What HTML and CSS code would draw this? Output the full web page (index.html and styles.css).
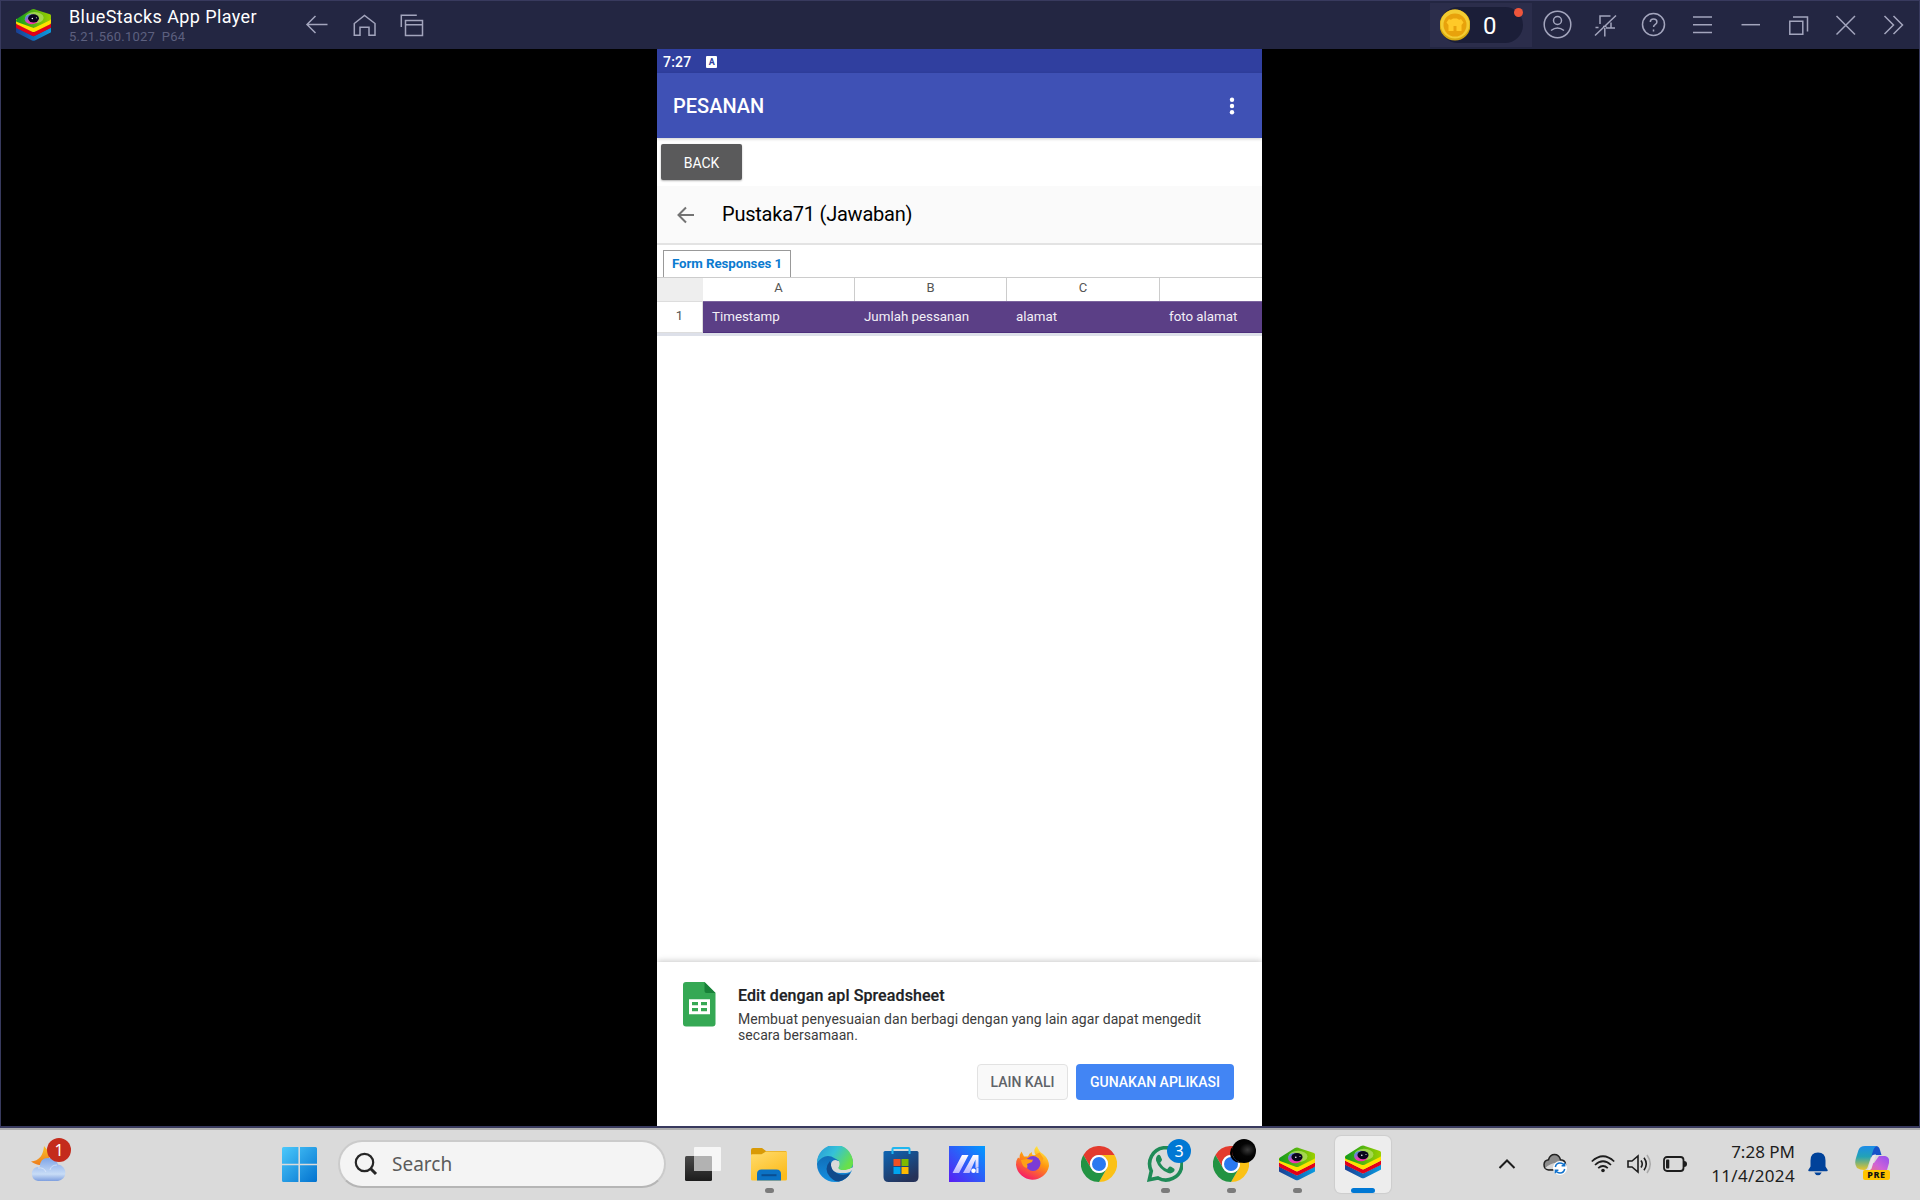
FILE: index.html
```html
<!DOCTYPE html>
<html lang="id">
<head>
<meta charset="utf-8">
<title>BlueStacks App Player</title>
<link rel="stylesheet" href="styles.css">
</head>
<body>
<svg class="defs" width="0" height="0" aria-hidden="true">
  <defs>
    <linearGradient id="bsGreen" x1="0" x2="1"><stop offset="0" stop-color="#109a1e"/><stop offset="1" stop-color="#9bd000"/></linearGradient>
    <linearGradient id="bsBlue" x1="0" x2="1"><stop offset="0" stop-color="#1a3f94"/><stop offset="1" stop-color="#0a9be0"/></linearGradient>
    <linearGradient id="bsRing" x1="0" x2="1" y1="0" y2="1"><stop offset="0" stop-color="#00b9f2"/><stop offset=".5" stop-color="#e83fb8"/><stop offset="1" stop-color="#ff2aa0"/></linearGradient>
    <symbol id="bluestacks" viewBox="0 0 36 33">
      <path fill="url(#bsBlue)" d="M0 19l18 9 18-9v4.400q0 .8-.8 1.200L19.500 32.400q-1.500.8-3 0L.8 24.600q-.8-.4-.8-1.200z"/>
      <path fill="#e2001a" d="M0 15l18 9 18-9v3.600q0 .8-.8 1.200L19.500 27.600q-1.500.8-3 0L.8 19.800q-.8-.4-.8-1.200z"/>
      <path fill="#ffe100" d="M0 10l18 9 18-9v4.400q0 .8-.8 1.200L19.500 23.400q-1.500.8-3 0L.8 15.600q-.8-.4-.8-1.200z"/>
      <path fill="url(#bsGreen)" d="M15.500.7q2.500-1.200 5 0L35 5.400q1 .5 1 1.500v3.200q0 1-1 1.500l-15 7.300q-2 1-4 0L1 13.400q-1-.5-1-1.400 0-1 1-2z"/>
      <ellipse cx="19" cy="9" rx="9.500" ry="5.800" fill="#b5dd66" opacity=".75"/>
      <ellipse cx="16" cy="10.500" rx="7" ry="5.200" fill="url(#bsRing)"/>
      <ellipse cx="18" cy="9.600" rx="5.600" ry="4.200" fill="#08061c"/>
      <circle cx="16.800" cy="9.800" r=".8" fill="#fff"/><circle cx="21" cy="9" r=".6" fill="#ddd"/>
    </symbol>
    <symbol id="chrome" viewBox="0 0 36 36">
      <path fill="#e33b2e" d="M2.400 9A18 18 0 0 1 33.600 9H18a9 9 0 0 0-7.800 13.500z"/>
      <path fill="#fbc116" d="M33.600 9A18 18 0 0 1 18 36l7.800-13.500A9 9 0 0 0 18 9z"/>
      <path fill="#229342" d="M18 36A18 18 0 0 1 2.400 9l7.800 13.500a9 9 0 0 0 15.600 0z"/>
      <circle cx="18" cy="18" r="9" fill="#fff"/><circle cx="18" cy="18" r="7" fill="#2a79f0"/>
    </symbol>
  </defs>
</svg>

<div class="window">
  <header class="titlebar">
    <svg class="logo" width="35" height="32"><use href="#bluestacks"/></svg>
    <div class="app-name">
      <div class="name">BlueStacks App Player</div>
      <div class="version">5.21.560.1027&nbsp; P64</div>
    </div>
    <nav class="tools tools-left">
      <svg viewBox="0 0 48 48"><path d="M34.500 24.500h-20M22.500 16l-8.500 8.500 8.500 8.500"/></svg>
      <svg viewBox="0 0 48 48"><path d="M13.300 23.500L23.500 15.500l10.500 8v11.800h-6v-8h-9v8h-5.700z"/></svg>
      <svg viewBox="0 0 48 48"><path d="M16.500 20.500h17v15h-17zM16.500 24.700h17M12.300 27V15.300h15.500"/></svg>
    </nav>
    <div class="coins">
      <div class="coin-pill">
        <svg width="30" height="32" viewBox="0 0 30 32"><circle cx="15" cy="16" r="15.500" fill="#d5a80f"/><circle cx="15" cy="15" r="14.500" fill="#f3cc32"/><circle cx="15" cy="16" r="11.500" fill="#e8a20c"/><path fill="#ffc928" d="M9 10q2 1.500 4-.5h4q2 2 4 .5l2.500 3.500-2 2.500v6h-5v-5h-3v5h-5v-6l-2-2.500z"/></svg>
        <span class="coin-count">0</span>
      </div>
      <i class="dot"></i>
    </div>
    <nav class="tools">
      <svg viewBox="0 0 48 48"><circle cx="23.500" cy="24.500" r="13.300"/><circle cx="23.500" cy="20.500" r="4"/><path d="M17 30.500q6.500-5 13 0"/></svg>
      <svg viewBox="0 0 48 48"><path d="M13 35.500L34 15.500M18 24v-8h10.500M29 22.500v5.500h4M24.500 26.500H21M22.800 28v8.500M13.500 27.500h3M24 28h8"/></svg>
      <svg viewBox="0 0 48 48"><circle cx="23.500" cy="24.500" r="11"/><path d="M20.300 22q0-3 3.300-3t3.300 3q0 1.500-1.800 2.600-1.500.9-1.500 2.400M23.500 29.500v2"/></svg>
      <svg viewBox="0 0 48 48"><path d="M15 17h19M15 24.700h19M15 32.500h19"/></svg>
      <svg viewBox="0 0 48 48"><path d="M15.500 24.700h18.500"/></svg>
      <svg viewBox="0 0 48 48"><path d="M15.800 21.300h13v13h-13zM19 17h14.500v14.500"/></svg>
      <svg viewBox="0 0 48 48"><path d="M14.500 16l18.500 18.500M33 16L14.500 34.500"/></svg>
      <svg viewBox="0 0 48 48"><path d="M14.500 16l9 9-9 9M23.500 16l9 9-9 9"/></svg>
    </nav>
  </header>

  <main class="stage">
    <section class="phone">
      <div class="status">
        <span>7:27</span>
        <span class="ime">A</span>
      </div>
      <div class="toolbar">
        <h1>PESANAN</h1>
        <svg width="6" height="18" viewBox="0 0 6 18" fill="#fff"><circle cx="3" cy="2.700" r="2.200"/><circle cx="3" cy="9" r="2.200"/><circle cx="3" cy="15.300" r="2.200"/></svg>
      </div>
      <div class="back-row"><button class="back">BACK</button></div>
      <div class="doc-head">
        <svg width="18" height="18" viewBox="0 0 18 18" fill="none" stroke="#737373" stroke-width="2"><path d="M17 9H2M9 1.500L1.500 9 9 16.500"/></svg>
        <h2>Pustaka71 (Jawaban)</h2>
      </div>
      <div class="tabs"><div class="tab">Form Responses 1</div></div>
      <div class="grid head"><div class="corner"></div><div>A</div><div>B</div><div>C</div><div></div></div>
      <div class="grid row"><div class="num">1</div><div>Timestamp</div><div>Jumlah pessanan</div><div>alamat</div><div>foto alamat</div></div>
      <div class="sheet-space"></div>
      <div class="promo">
        <svg class="sheets" width="33" height="45" viewBox="0 0 33 45"><path fill="#35a854" d="M3 0h18.500L32.500 11v30.500a3 3 0 0 1-3 3H3a3 3 0 0 1-3-3V3a3 3 0 0 1 3-3z"/><path fill="#188038" d="M21.500 0l11 11h-9a2 2 0 0 1-2-2z"/><path fill="#fff" fill-rule="evenodd" d="M6 17.300h21v15H6zM9 20v3.300h6V20zM18 20v3.300h6V20zM9 26v3.300h6V26zM18 26v3.300h6V26z"/></svg>
        <div class="promo-body">
          <h3>Edit dengan apl Spreadsheet</h3>
          <p>Membuat penyesuaian dan berbagi dengan yang lain agar dapat mengedit<br>secara bersamaan.</p>
          <div class="actions"><button class="later">LAIN KALI</button><button class="use">GUNAKAN APLIKASI</button></div>
        </div>
      </div>
    </section>
  </main>
</div>

<footer class="taskbar">
  <div class="weather">
    <svg width="36" height="36" viewBox="0 0 36 36">
      <defs><linearGradient id="cl" x2="0" y2="1"><stop offset="0" stop-color="#7fa5e8"/><stop offset=".7" stop-color="#c8dcf6"/><stop offset="1" stop-color="#7e9fdf"/></linearGradient><linearGradient id="mo" x2="0" y2="1"><stop offset="0" stop-color="#f9c22b"/><stop offset="1" stop-color="#ee7d1c"/></linearGradient></defs>
      <path fill="url(#mo)" d="M14 0q8 8 4 14-6 9-17 1.500 12-1 13-15.500z"/>
      <path fill="url(#cl)" d="M8 35a7.200 7.200 0 0 1-1-14q2 0 2.500.3Q10 12 18 12t10 6.500A8.300 8.300 0 0 1 28 35z"/>
      <path fill="none" stroke="#ecf4fe" opacity=".55" d="M8 22q6-1 8 4M27 19q-6 0-7 5"/>
    </svg>
    <span class="badge red">1</span>
  </div>
  <svg class="start" width="35" height="35" viewBox="0 0 35 35"><defs><linearGradient id="win" x2="1" y2="1"><stop offset="0" stop-color="#4cc9fb"/><stop offset="1" stop-color="#0272cf"/></linearGradient></defs><path fill="url(#win)" d="M1.500 0H16.400V16.700H0V1.500Q0 0 1.500 0zM18 0h15.500Q35 0 35 1.500V16.700H18zM0 18.300h16.400V35H1.500Q0 35 0 33.500zM18 18.300h17v15.200q0 1.500-1.500 1.500H18z"/></svg>
  <div class="search">
    <svg width="24" height="24" viewBox="0 0 24 24" fill="none" stroke="#262626"><circle cx="10.500" cy="10.500" r="8.700" stroke-width="2.200"/><path stroke-width="3" d="M16.500 16.500l5.500 5.500"/></svg>
    <span>Search</span>
  </div>

  <div class="apps">
    <div class="app"><svg viewBox="0 0 36 36"><defs><linearGradient id="tv" x2="0" y2="1"><stop offset="0" stop-color="#4a4a4a"/><stop offset="1" stop-color="#1c1c1c"/></linearGradient></defs><rect y="10" width="27" height="25" rx="1.500" fill="url(#tv)"/><rect x="9" y="1" width="27" height="24" rx="1" fill="#f6f6f6"/><path fill="#b2b2b2" d="M9 10h17q1 0 1 1v14H9z"/></svg></div>
    <div class="app run"><svg viewBox="0 0 36 36"><defs><linearGradient id="fo" x2=".6" y2="1"><stop offset="0" stop-color="#ffdc6e"/><stop offset="1" stop-color="#fcbc1d"/></linearGradient></defs><path fill="#d99a06" d="M0 4q0-2 2-2h9l4 3h20l1 2v5H0z"/><path fill="url(#fo)" d="M0 9q0-.8 1-.8h9.500L15 5.500h20q1 0 1 1V33q0 1.500-1.500 1.500h-33Q0 34.500 0 33z"/><path fill="#0b72c4" d="M6 34.500V28q0-4.500 4.500-4.500h15q4.500 0 4.500 4.500v6.500z"/><path stroke="#0a4e92" stroke-width="2" d="M10.500 29.200h15"/></svg></div>
    <div class="app"><svg viewBox="0 0 36 36"><defs><linearGradient id="e1" x2="1" y2=".5"><stop offset="0" stop-color="#2794d8"/><stop offset=".5" stop-color="#35c1d8"/><stop offset="1" stop-color="#68e04a"/></linearGradient><linearGradient id="e2" x2="0" y2="1"><stop offset="0" stop-color="#0f60a8"/><stop offset="1" stop-color="#1590e0"/></linearGradient></defs><circle cx="18" cy="18" r="18" fill="url(#e2)"/><path fill="#dadada" d="M37 21q-1 3-4 5-5 2-9 0-5-3-5-8l-2-3h6l8 8z"/><path fill="url(#e1)" d="M0 17A18 18 0 0 1 36 16.500q.4 6-6 7.500-5 1-8-.5-1.500-1.500 0-3 2-6-4-8Q8 6 0 17z"/><path fill="#114a8b" d="M13 15q-7 8 0 16 5 5 9 4.500 8-2 11.300-8.500-6 3-12 1-6.500-3-7-9z"/><path fill="#dadada" d="M22.500 23.500q-2.500-1.500-.8-3.500 1.500-5.500-3.500-6-4.500.5-4.200 5.500 1.500 8 9.500 7.500 7 0 11-4.500l-4 1q-4.500 1.200-8 0z"/></svg></div>
    <div class="app"><svg viewBox="0 0 36 36"><defs><linearGradient id="ms" x2=".6" y2="1"><stop offset="0" stop-color="#0e65b4"/><stop offset="1" stop-color="#253259"/></linearGradient></defs><path fill="url(#ms)" d="M.5 6.500q0-1.500 1.500-1.500h32q1.500 0 1.500 1.500V31q0 5-5 5h-25q-5 0-5-5z"/><path fill="none" stroke="#20b6ef" stroke-width="2" d="M9.500 8V3q0-1 1-1h15q1 0 1 1v5"/><path fill="#f25022" d="M10.500 13h7v7h-7z"/><path fill="#7fba00" d="M18.500 13h7v7h-7z"/><path fill="#00a4ef" d="M10.500 21h7v7h-7z"/><path fill="#ffb900" d="M18.500 21h7v7h-7z"/></svg></div>
    <div class="app"><svg viewBox="0 0 36 36"><defs><linearGradient id="my" x1="0" y1="1" x2="1" y2="0"><stop offset="0" stop-color="#5a1df2"/><stop offset="1" stop-color="#009bff"/></linearGradient><linearGradient id="myb" x2="0" y2="1"><stop offset="0" stop-color="#fff"/><stop offset="1" stop-color="#b9b4ff"/></linearGradient></defs><path fill="url(#my)" d="M0 0h36v36H0z"/><path fill="url(#myb)" d="M13 9h6.500L10 27H3.500zM24 9h5.500v12.500l-3 .5V13.500L20.500 27H14z"/><circle cx="24.500" cy="24.800" r="2.300" fill="#fff"/><path fill="#d9dcff" d="M27.300 22h2.200v5h-2.200z"/></svg></div>
    <div class="app"><svg viewBox="0 0 36 36"><defs><linearGradient id="ff" x1=".8" x2=".3" y2="1"><stop offset="0" stop-color="#fff44f"/><stop offset=".45" stop-color="#ff980e"/><stop offset="1" stop-color="#f5156c"/></linearGradient></defs><path fill="url(#ff)" d="M6.500 5.500l2.500 5h4q1-3.500 4-4.500v2.500q2 1 4 .5-4-5 1-9 1.500 5 6 8 6 5 6 12A16.700 16.700 0 0 1 1 19q0-5 2-7.500l1.500 1Q4.500 8 6.500 5.500z"/><circle cx="18" cy="17.500" r="7.500" fill="#7b3bd6"/><path fill="#ffa016" d="M6 14l6-1q5 1 6 .5l-1 2.500-5 2q1 2 0 4-5-1-6-8zM19 9.500q7 1.500 7.500 8l2-5-4-6z"/></svg></div>
    <div class="app"><svg><use href="#chrome"/></svg></div>
    <div class="app run"><svg viewBox="0 0 36 36"><path fill="none" stroke="#1f8b57" stroke-width="3.600" d="M2.300 33.700l2-8.700A16.200 16.200 0 1 1 11 32z"/><path fill="#1f8b57" d="M11 9q1.500-.6 2.500 1l1.500 3.500q.3 1-1.800 3.300 3 5 7 6.500l2-2.500q1-.8 2 0l3 2q.8.8 0 2.500-2.500 3-6 1.800Q12 23.500 9 14.500 8.500 11 11 9z"/></svg><span class="badge blue">3</span></div>
    <div class="app run"><svg><use href="#chrome"/></svg><span class="badge avatar"></span></div>
    <div class="app run"><svg><use href="#bluestacks"/></svg></div>
    <div class="app run active"><svg class="up"><use href="#bluestacks"/></svg></div>
  </div>

  <div class="tray">
    <svg width="18" height="12" viewBox="0 0 18 12" fill="none" stroke="#1d1d1d" stroke-width="2"><path d="M1.500 10L9 2.500l7.500 7.500"/></svg>
    <svg class="t-cloud" width="26" height="24" viewBox="0 0 26 24"><path fill="#8c8c8c" stroke="#222" stroke-width="1.500" d="M6.500 18a5.200 5.200 0 0 1 0-10.300Q8 2.500 12.500 2.500T18.500 7.700q5 .3 5 5T18.500 18z"/><path fill="#d5d5d5" d="M3 16q10-8 16-3l-4 4H6z"/><circle cx="18" cy="16" r="7" fill="#fff"/><path fill="none" stroke="#1272cc" stroke-width="1.500" d="M13.300 15q.9-4 4.700-4 3 0 4.300 2.500M22.700 17q-.9 4-4.700 4-3 0-4.300-2.500M22.600 10.700v3h-3M13.400 21.300v-3h3"/></svg>
    <svg class="t-wifi" width="24" height="18" viewBox="0 0 24 18" fill="none" stroke="#1d1d1d" stroke-width="1.700"><path d="M.8 6.500q11.200-10.500 22.400 0M4 10q8-7.500 16 0M7.200 13.200q4.800-4.400 9.600 0"/><circle cx="12" cy="15.500" r="1.800" fill="#1d1d1d" stroke="none"/></svg>
    <svg class="t-vol" width="25" height="20" viewBox="0 0 25 20" fill="none" stroke="#1d1d1d" stroke-width="1.600"><path d="M1 7v6h4l6 5V2L5 7zM14 6.500q2.500 3.500 0 7M17 3.800q4.500 6.200 0 12.400"/><path stroke="#aaa" d="M20 1q6.500 9 0 18"/></svg>
    <svg class="t-bat" width="25" height="16" viewBox="0 0 25 16"><rect x="1" y="1" width="19.500" height="14" rx="3" fill="none" stroke="#1d1d1d" stroke-width="1.800"/><rect x="3" y="3.500" width="3.300" height="9" rx="1" fill="#1d1d1d"/><path fill="#1d1d1d" d="M21 5q3 0 3 3t-3 3z"/></svg>
    <div class="clock"><div>7:28 PM</div><div class="date">11/4/2024</div></div>
    <svg class="t-bell" width="20" height="24" viewBox="0 0 20 24" fill="#00429a"><path d="M10 .5q7.500 0 7.500 8v6l2.200 3.500q.3 1.200-1 1.200H1.300q-1.300 0-1-1.200L2.500 14.500v-6Q2.500.5 10 .5zM6.300 20.500h7.400Q12.500 23.300 10 23.300t-3.700-2.800z"/></svg>
    <div class="copilot">
      <svg width="34" height="28" viewBox="0 0 34 28"><defs><linearGradient id="cp1" x2="0" y2="1"><stop offset="0" stop-color="#1c8ce8"/><stop offset=".45" stop-color="#23a3b5"/><stop offset="1" stop-color="#ecc52a"/></linearGradient><linearGradient id="cp2" x1="1" x2="0" y2="1"><stop offset="0" stop-color="#9150f0"/><stop offset=".5" stop-color="#cf62d8"/><stop offset="1" stop-color="#ff7a54"/></linearGradient></defs><path fill="#1652c9" d="M17 0h4q3 0 4 4l1.500 5H19q-2 0-3 3z"/><path fill="url(#cp1)" d="M10 0h12q-3 1-4 5l-5 15q-1 4-4 4-4 0-7-2-3-4-1-10l2.500-8Q5 0 10 0z"/><path fill="url(#cp2)" d="M24 10h6q5 1 4 7l-2 7q-1 4-6 4H10q4-1 5-5l2-6h2z"/><path fill="#e9e4ea" d="M17 10q1-2 4-1.500l-4.500 14q-1 2-3.500 2z"/></svg>
      <span class="pre">PRE</span>
    </div>
  </div>
</footer>
</body>
</html>
```
FILE: styles.css
```css
* { box-sizing: border-box; }
body {
  margin: 0;
  width: 1920px;
  height: 1200px;
  overflow: hidden;
  display: flex;
  flex-direction: column;
  font-family: Roboto, "Liberation Sans", sans-serif;
  background: #000;
}
h1, h2, h3, p { margin: 0; font-weight: 400; }
button { font-family: inherit; border: 0; padding: 0; margin: 0; white-space: nowrap; }
svg { display: block; flex: none; }
.defs { position: absolute; }

/* player window */
.window {
  height: 1128px;
  display: flex;
  flex-direction: column;
  border: 1px solid #383a5e;
  border-bottom-width: 2px;
}
.titlebar {
  height: 48px;
  flex: none;
  display: flex;
  align-items: flex-start;
  background: #232642;
}
.logo { margin: 8px 0 0 15px; }
.app-name { width: 242px; padding: 5px 0 0 18px; white-space: nowrap; }
.name { color: #fff; font-size: 18px; line-height: 21px; letter-spacing: .4px; }
.version { color: #5d607f; font-size: 13px; line-height: 19px; letter-spacing: .2px; }
.tools { display: flex; }
.tools svg { width: 48px; height: 48px; margin-top: -1px; fill: none; stroke: #a3a5bd; stroke-width: 1.500; }
.tools-left { margin-right: 993px; }
.coins {
  position: relative;
  width: 102px;
  height: 44px;
  margin: 2px 2px 0 0;
  padding: 4px 0 0 10px;
  background: #2b2d4b;
}
.coin-pill { display: flex; align-items: center; width: 83px; height: 36px; border-radius: 18px; background: #1b1e38; }
.coin-count { margin: 2px 0 0 13px; color: #fff; font-size: 24px; }
.dot { position: absolute; left: 84px; top: 5px; width: 9px; height: 9px; border-radius: 50%; background: #ee553b; }

.stage { flex: 1; display: flex; padding-left: 656px; background: #000; }
.phone { width: 605px; display: flex; flex-direction: column; background: #fff; }

/* android chrome */
.status {
  height: 24px;
  display: flex;
  align-items: center;
  gap: 15px;
  padding: 1px 0 0 6px;
  background: #303f9f;
  color: #fff;
  font-size: 14px;
  font-weight: 500;
  letter-spacing: .2px;
}
.ime { width: 11px; height: 12px; border-radius: 1px; background: #fff; color: #303f9f; font-size: 9px; line-height: 12px; font-weight: 700; text-align: center; letter-spacing: 0; }
.toolbar {
  height: 65px;
  display: flex;
  align-items: center;
  justify-content: space-between;
  padding: 0 27px 0 16px;
  background: #3f51b5;
  color: #fff;
  position: relative;
  box-shadow: 0 1px 3px rgba(0,0,0,.2);
}
.toolbar h1 { font-size: 20px; font-weight: 500; }
.back-row { height: 48px; padding: 6px 4px; display: flex; }
.back { width: 81px; height: 36px; padding-top: 1px; border-radius: 2px; background: #5a5a5b; color: #fff; font-size: 14px; box-shadow: 0 1px 2px rgba(0,0,0,.3); }
.doc-head { height: 59px; display: flex; align-items: center; gap: 27px; padding-left: 20px; background: #fafafa; border-bottom: 2px solid #e3e3e3; }
.doc-head h2 { font-size: 20px; line-height: 22px; padding-bottom: 1px; color: #000; letter-spacing: -.23px; }

/* published sheet */
.tabs { height: 33px; padding: 5px 0 0 6px; border-bottom: 1px solid #ccc; }
.tab { width: 128px; height: 27px; border: 1px solid #999; border-bottom: 0; color: #0b7bd0; font-size: 13.330px; font-weight: 700; line-height: 26px; letter-spacing: -.07px; text-align: center; white-space: nowrap; }
.grid { display: grid; grid-template-columns: 46px 152px 152px 153px 102px; }
.head { height: 23px; color: #555; font-size: 13px; line-height: 20px; text-align: center; }
.head div { border-right: 1px solid #ccc; }
.head div:last-child { border-right: 0; }
.head .corner { background: #eee; border: 0; }
.row { height: 35px; border-bottom: 3px solid #dde0e9; color: #f3eff7; font-size: 13.330px; line-height: 30px; }
.row div { background: #5b3f86; padding-left: 9px; white-space: nowrap; border-top: 1px solid #7b649e; border-bottom: 1px solid #4d2f7c; }
.row .num { background: #fff; color: #555; font-size: 13px; line-height: 27px; padding: 0; text-align: center; border-color: #ddd; border-right: 1px solid #ddd; }
.sheet-space { flex: 1; }

.promo {
  height: 164px;
  display: flex;
  gap: 22px;
  padding: 20px 28px 0 26px;
  background: #fff;
  box-shadow: 0 -1px 6px rgba(0,0,0,.22);
  clip-path: inset(-8px 0 0 0);
}
.promo-body { flex: 1; padding-top: 4px; }
.promo h3 { font-size: 16px; font-weight: 500; line-height: 20px; letter-spacing: .1px; color: #202124; -webkit-text-stroke: .2px; white-space: nowrap; }
.promo p { margin-top: 5px; font-size: 14px; line-height: 16px; letter-spacing: .055px; color: #3c3c3c; white-space: nowrap; }
.actions { display: flex; justify-content: flex-end; gap: 8px; margin-top: 21px; }
.actions button { height: 36px; border-radius: 4px; font-size: 14px; font-weight: 500; }
.later { width: 91px; background: #f9f9f9; border: 1px solid #e2e2e2; color: #5f6368; }
.use { width: 158px; background: #4285f4; color: #fff; }

/* windows taskbar */
.taskbar {
  height: 72px;
  display: flex;
  align-items: center;
  padding-bottom: 2px;
  background: #dadada;
  border-top: 2px solid #adadad;
  font-family: "Noto Sans", "Open Sans", sans-serif;
  color: #1d1d1d;
}
.weather { position: relative; width: 252px; margin-left: 30px; }
.badge { position: absolute; width: 24px; height: 24px; border-radius: 50%; color: #fff; font-size: 16px; line-height: 24px; text-align: center; }
.red { left: 17px; top: -8px; background: #c42b1c; }
.blue { left: 35px; top: 4px; background: #0078d4; }
.avatar { left: 34px; top: 4px; background: radial-gradient(ellipse at 65% 45%, #3a3a3a 0, #050505 35%, #000 70%); box-shadow: -4px 2px 0 -2px #000; }
.start { margin-right: 21px; }
.search {
  width: 328px;
  height: 48px;
  display: flex;
  align-items: center;
  gap: 14px;
  padding-left: 14px;
  border: 2px solid #cbcbcb;
  border-bottom-color: #b5b5b5;
  border-radius: 24px;
  background: #f4f4f4;
  color: #5b5b5b;
  font-size: 19px;
}
.apps { display: flex; margin-left: 4px; }
.app { position: relative; width: 66px; height: 58px; padding: 11px 15px; display: flex; }
.app svg { width: 36px; height: 36px; }
.run::after { content: ""; position: absolute; left: 29px; bottom: 0; width: 9px; height: 5px; border-radius: 3px; background: #7b7b7b; }
.active::before { content: ""; position: absolute; left: 5px; top: 1px; width: 56px; height: 57px; border-radius: 6px; background: #ededed; box-shadow: 0 0 1px 1px rgba(0,0,0,.06); }
.active svg { position: relative; }
.up { margin-top: -2px; }
.active::after { left: 21px; width: 24px; background: #0078d4; }

.tray { display: flex; align-items: center; margin-left: 102px; }
.t-cloud { margin-left: 26px; }
.t-wifi { margin-left: 23px; }
.t-vol { margin-left: 12px; }
.t-bat { margin-left: 11px; }
.clock { width: 107px; font-size: 17px; line-height: 24px; text-align: right; white-space: nowrap; }
.date { letter-spacing: .35px; }
.t-bell { margin-left: 13px; }
.copilot { position: relative; width: 36px; height: 36px; margin-left: 27px; }
.pre { position: absolute; left: 8px; top: 24px; width: 27px; height: 10px; border-radius: 2px; background: #ffc400; color: #111; font-size: 9px; font-weight: 800; line-height: 10px; text-align: center; letter-spacing: .6px; }
```
